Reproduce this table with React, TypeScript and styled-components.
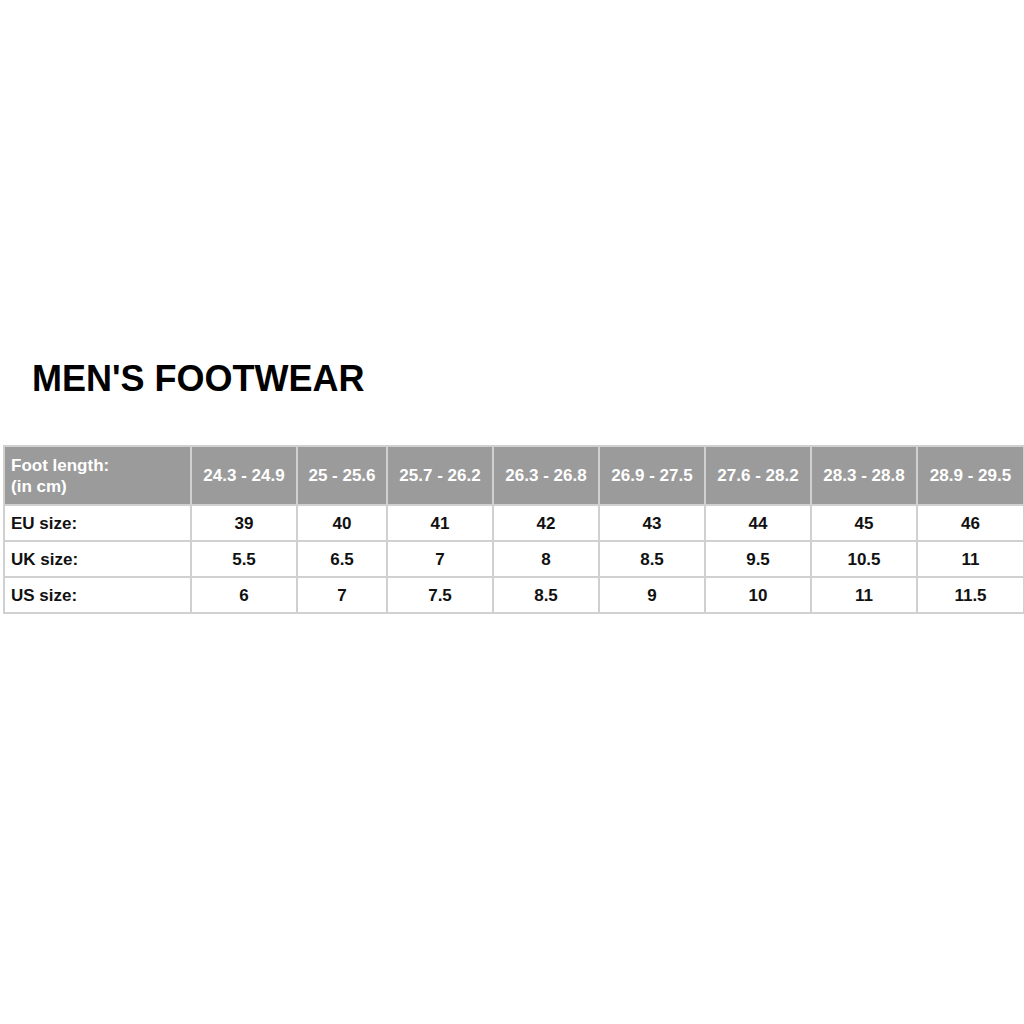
import React from "react";
import styled, { createGlobalStyle } from "styled-components";

const GlobalStyle = createGlobalStyle`
  html, body {
    margin: 0;
    padding: 0;
    background: #ffffff;
    font-family: "Liberation Sans", Arial, sans-serif;
  }
`;

const Page = styled.main`
  width: 1024px;
  height: 1024px;
  padding-top: 358px;
  box-sizing: border-box;
  background: #fff;
`;

const Title = styled.h1`
  margin: 0 0 45px 32px;
  font-size: 36px;
  line-height: 42px;
  font-weight: 700;
  color: #000;
`;

const Table = styled.table`
  margin-left: 3px;
  border-collapse: collapse;
  table-layout: fixed;
  width: 1020px;
  font-size: 17px;
  font-weight: 700;
`;

const Cell = styled.td<{ $head?: boolean; $label?: boolean }>`
  border: 2px solid #d0d0d0;
  padding: 0 6px;
  height: ${(p) => (p.$head ? "57px" : "34px")};
  background: ${(p) => (p.$head ? "#9b9b9b" : "#fff")};
  color: ${(p) => (p.$head ? "#fff" : "#111")};
  text-align: ${(p) => (p.$label ? "left" : "center")};
  line-height: 21px;
  white-space: nowrap;
`;

const widths = [187, 106, 90, 106, 106, 106, 106, 106, 107];

const ranges = [
  "24.3 - 24.9",
  "25 - 25.6",
  "25.7 - 26.2",
  "26.3 - 26.8",
  "26.9 - 27.5",
  "27.6 - 28.2",
  "28.3 - 28.8",
  "28.9 - 29.5",
];

const rows: { label: string; values: string[] }[] = [
  { label: "EU size:", values: ["39", "40", "41", "42", "43", "44", "45", "46"] },
  { label: "UK size:", values: ["5.5", "6.5", "7", "8", "8.5", "9.5", "10.5", "11"] },
  { label: "US size:", values: ["6", "7", "7.5", "8.5", "9", "10", "11", "11.5"] },
];

const App: React.FC = () => (
  <>
    <GlobalStyle />
    <Page>
      <Title>MEN'S FOOTWEAR</Title>
      <Table>
        <colgroup>
          {widths.map((w, i) => (
            <col key={i} style={{ width: w }} />
          ))}
        </colgroup>
        <tbody>
          <tr>
            <Cell $head $label>
              Foot length:
              <br />
              (in cm)
            </Cell>
            {ranges.map((r) => (
              <Cell $head key={r}>
                {r}
              </Cell>
            ))}
          </tr>
          {rows.map((row) => (
            <tr key={row.label}>
              <Cell $label>{row.label}</Cell>
              {row.values.map((v, i) => (
                <Cell key={i}>{v}</Cell>
              ))}
            </tr>
          ))}
        </tbody>
      </Table>
    </Page>
  </>
);

export default App;
